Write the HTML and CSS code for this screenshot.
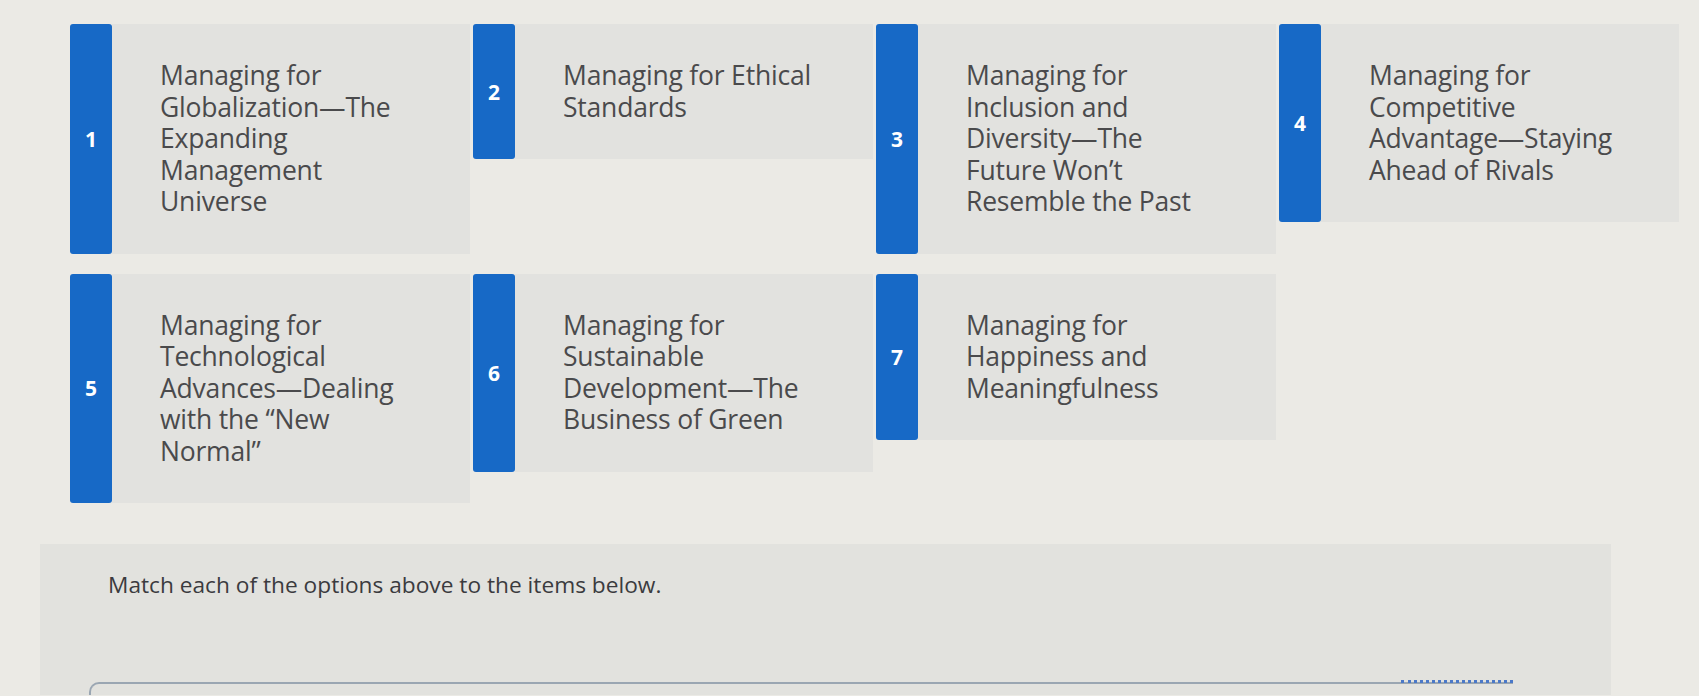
FILE: index.html
```html
<!DOCTYPE html>
<html lang="en">
<head>
<meta charset="utf-8">
<title>Matching</title>
<link rel="stylesheet" href="styles.css">
</head>
<body>
<div class="page">
  <div class="options">
    <div class="option"><div class="tab">1</div><div class="label"><span>Managing for Globalization—The Expanding Management Universe</span></div></div>
    <div class="option"><div class="tab">2</div><div class="label"><span>Managing for Ethical Standards</span></div></div>
    <div class="option"><div class="tab">3</div><div class="label"><span>Managing for Inclusion and Diversity—The Future Won’t Resemble the Past</span></div></div>
    <div class="option"><div class="tab">4</div><div class="label"><span>Managing for Competitive Advantage—Staying Ahead of Rivals</span></div></div>
    <div class="option"><div class="tab">5</div><div class="label"><span>Managing for Technological Advances—Dealing with the “New Normal”</span></div></div>
    <div class="option"><div class="tab">6</div><div class="label"><span>Managing for Sustainable Development—The Business of Green</span></div></div>
    <div class="option"><div class="tab">7</div><div class="label"><span>Managing for Happiness and Meaningfulness</span></div></div>
  </div>
  <div class="panel">
    <p class="prompt">Match each of the options above to the items below.</p>
    <div class="dropbox"><div class="handle"></div></div>
  </div>
</div>
</body>
</html>
```
FILE: styles.css
```css
html, body {
  margin: 0;
  padding: 0;
  background: #ebeae5;
  overflow: hidden;
}
.page {
  height: 696px;
  overflow: hidden;
  font-family: "Open Sans", "Liberation Sans", sans-serif;
}
.options {
  display: grid;
  grid-template-columns: repeat(4, 400px);
  column-gap: 3px;
  row-gap: 20px;
  align-items: start;
  padding: 24px 0 0 70px;
}
.option {
  display: flex;
}
.tab {
  width: 42px;
  flex: 0 0 42px;
  background: #1769c6;
  border-radius: 3px;
  color: #fff;
  font-weight: 700;
  font-size: 21px;
  display: flex;
  align-items: center;
  justify-content: center;
}
.label {
  flex: 1;
  background: #e2e2df;
  padding: 36px 40px 36px 48px;
  color: #4a4a4c;
  font-size: 26.5px;
  line-height: 31.5px;
  letter-spacing: -0.2px;
}
.label span {
  display: block;
  width: 255px;
}
.panel {
  margin: 41px 0 0 40px;
  width: 1571px;
  height: 151px;
  overflow: hidden;
  background: #e2e2de;
  padding: 27px 0 0 68px;
  box-sizing: border-box;
}
.prompt {
  margin: 0;
  font-size: 22.7px;
  line-height: 28px;
  color: #3b3b3e;
}
.dropbox {
  margin: 83px 0 0 -19px;
  width: 1422px;
  height: 11px;
  border-top: 2px solid #9aa6b2;
  border-left: 2px solid #9aa6b2;
  border-top-left-radius: 10px;
  display: flex;
  justify-content: flex-end;
}
.handle {
  width: 112px;
  height: 6px;
  margin-top: -4px;
  border-top: 3px dotted #4a78c8;
}
```
